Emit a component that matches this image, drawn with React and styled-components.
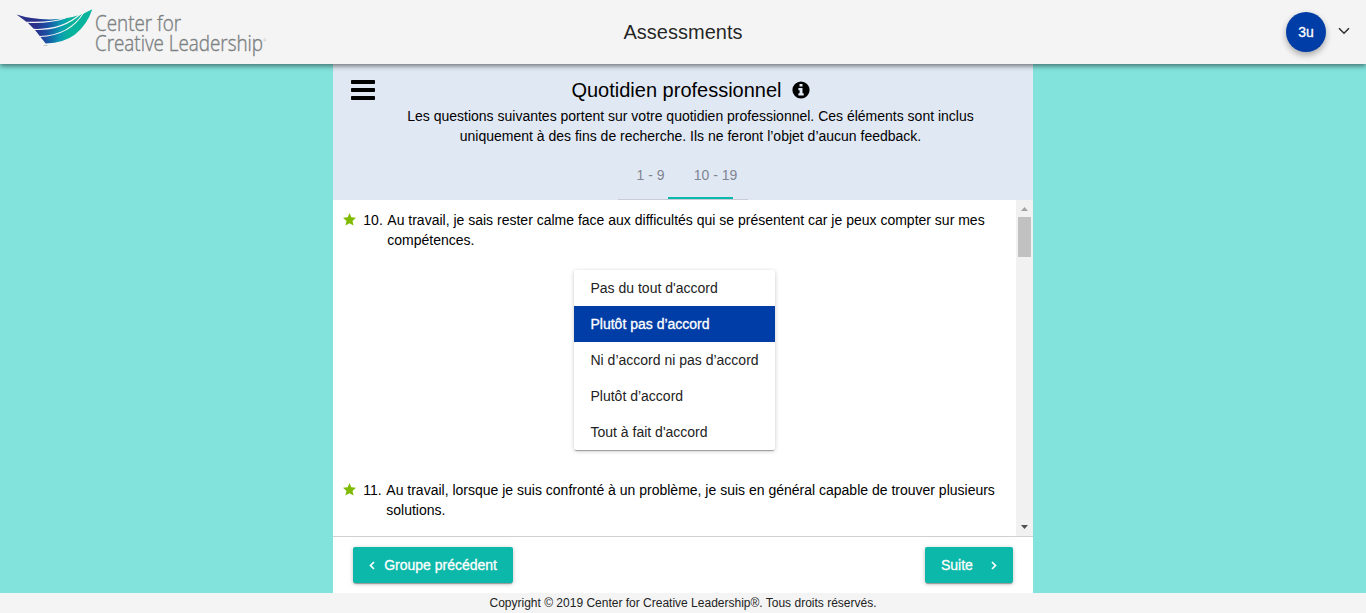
import React from "react";
import styled, { createGlobalStyle } from "styled-components";

const GlobalStyle = createGlobalStyle`
  * { box-sizing: border-box; }
  html, body { margin: 0; padding: 0; }
  body {
    overflow: hidden;
    font-family: "Liberation Sans", Arial, sans-serif;
    font-size: 14px;
    line-height: 20px;
    color: #000;
  }
`;

const Page = styled.div`
  display: flex;
  flex-direction: column;
  height: 613px;
  background: #82e2dc;
`;

const Header = styled.header`
  flex: 0 0 64px;
  z-index: 2;
  display: grid;
  grid-template-columns: 1fr auto 1fr;
  align-items: center;
  padding: 0 16px;
  background: #f4f4f4;
  box-shadow: 0 2px 5px rgba(0, 0, 0, 0.5);
`;

const Logo = styled.svg`
  display: block;
  width: 256px;
  height: 52px;
  overflow: visible;
`;

const AppTitle = styled.h1`
  margin: 0;
  font-size: 20px;
  font-weight: 400;
  color: rgba(0, 0, 0, 0.87);
`;

const Account = styled.div`
  display: flex;
  justify-content: flex-end;
  align-items: center;
  gap: 12px;
`;

const Avatar = styled.div`
  width: 40px;
  height: 40px;
  border-radius: 50%;
  background: #003da6;
  color: #fff;
  font-weight: 400;
  -webkit-text-stroke: 0.3px #fff;
  line-height: 40px;
  text-align: center;
  box-shadow: 0 3px 6px rgba(0, 0, 0, 0.32);
`;

const Chevron = styled.svg`
  display: block;
  width: 12px;
  height: 8px;
  margin-top: -3px;
`;

const Panel = styled.main`
  flex: 1;
  min-height: 0;
  display: flex;
  flex-direction: column;
  width: 700px;
  margin: 0 auto;
  background: #fff;
`;

const SectionHead = styled.section`
  flex: 0 0 136px;
  display: grid;
  grid-template-columns: 60px 595px 45px;
  background: #e0e8f4;
`;

const MenuIcon = styled.svg`
  width: 24px;
  height: 20px;
  margin: 16px 0 0 18px;
`;

const SectionBody = styled.div`
  display: flex;
  flex-direction: column;
  align-items: center;
  height: 136px;
  padding-top: 16px;
`;

const SectionTitle = styled.h2`
  display: flex;
  align-items: center;
  gap: 10px;
  height: 20px;
  margin: 0 0 6px;
  font-size: 20px;
  font-weight: 400;
`;

const Intro = styled.p`
  margin: 0;
  width: 590px;
  text-align: center;
`;

const Tabs = styled.nav`
  display: grid;
  grid-template-columns: 65px 65px;
  width: 130px;
  height: 48px;
  margin: 6px 0 0 -15px;
  position: relative;
  border-bottom: 1px solid #c9ccd6;
`;

const Tab = styled.span`
  line-height: 46px;
  text-align: center;
  color: #7f8591;
`;

const InkBar = styled.div`
  position: absolute;
  left: 50px;
  bottom: 0;
  width: 65px;
  height: 2px;
  background: #0bb8a9;
`;

const Scroller = styled.section`
  flex: 0 0 336px;
  display: grid;
  grid-template-columns: 1fr 17px;
  grid-template-rows: 336px;
  overflow: hidden;
`;

const Questions = styled.div`
  display: flex;
  flex-direction: column;
  overflow: hidden;
  padding: 10px 0 0 10px;
`;

const Question = styled.article`
  flex: 0 0 270px;
`;

const Prompt = styled.div`
  display: grid;
  grid-template-columns: 20.3px ${(p) => p.$number}px 1fr;
`;

const Star = styled.svg`
  width: 13px;
  height: 13px;
  margin-top: 3px;
`;

const PromptText = styled.p`
  margin: 0;
  max-width: 622px;
`;

const Options = styled.ul`
  width: 201px;
  margin: 20px 0 0 231px;
  padding: 0;
  list-style: none;
  border-radius: 2px;
  background: #fff;
  box-shadow: 0 1px 4px rgba(0, 0, 0, 0.22), 0 2px 1px -1px rgba(0, 0, 0, 0.3);
`;

const Option = styled.li`
  height: 36px;
  padding-left: 16.5px;
  line-height: 36px;
  color: ${(p) => (p.$selected ? "#fff" : "#222")};
  background: ${(p) => (p.$selected ? "#003da6" : "transparent")};
  -webkit-text-stroke: ${(p) => (p.$selected ? "0.3px #fff" : "0")};
`;

const ScrollTrack = styled.div`
  display: flex;
  flex-direction: column;
  align-items: center;
  background: #f1f1f1;
`;

const ScrollArrow = styled.svg`
  display: block;
  width: 17px;
  height: 17px;
`;

const ScrollThumb = styled.div`
  width: 13px;
  height: 40px;
  margin-bottom: auto;
  background: #c1c1c1;
`;

const Actions = styled.div`
  flex: 1;
  display: flex;
  justify-content: space-between;
  align-items: flex-start;
  padding: 10px 20px 0;
  border-top: 1px solid #d0d0d0;
`;

const Button = styled.button`
  display: flex;
  justify-content: space-between;
  align-items: center;
  width: ${(p) => p.$width}px;
  height: 36px;
  padding: 0 16px;
  border: 0;
  border-radius: 2px;
  font: 14px "Liberation Sans", Arial, sans-serif;
  color: #fff;
  -webkit-text-stroke: 0.3px #fff;
  background: #0bb8a9;
  box-shadow: 0 1px 4px rgba(0, 0, 0, 0.26), 0 2px 1px -1px rgba(0, 0, 0, 0.3);
`;

const Arrow = styled.svg`
  width: 6px;
  height: 9px;
  margin-top: 1px;
`;

const Footer = styled.footer`
  flex: 0 0 20px;
  background: #f4f4f4;
  font-size: 12px;
  line-height: 20px;
  text-align: center;
  color: #222;
`;

const questions = [
  {
    number: 10,
    gutter: 24,
    text: "Au travail, je sais rester calme face aux difficultés qui se présentent car je peux compter sur mes compétences.",
    options: [
      "Pas du tout d'accord",
      "Plutôt pas d’accord",
      "Ni d’accord ni pas d’accord",
      "Plutôt d’accord",
      "Tout à fait d'accord",
    ],
    selected: 1,
  },
  {
    number: 11,
    gutter: 23,
    text: "Au travail, lorsque je suis confronté à un problème, je suis en général capable de trouver plusieurs solutions.",
  },
];

function BrandLogo() {
  return (
    <Logo viewBox="16 6 256 52">
      <defs>
        <linearGradient id="wing" gradientUnits="userSpaceOnUse" x1="36" y1="25" x2="74" y2="28">
          <stop offset="0" stopColor="#2a2f8a" />
          <stop offset="0.3" stopColor="#1a4fa3" />
          <stop offset="0.65" stopColor="#0a9ab2" />
          <stop offset="0.85" stopColor="#06b09d" />
          <stop offset="1" stopColor="#06b39c" />
        </linearGradient>
      </defs>
      <path d="M16.5 14.6Q30 19.2 50 19.4Q76 19 92.3 9.2Q87 25 75 34.5Q64 43 45.7 43.5L40.5 37L35 30L28 23Z" fill="url(#wing)" />
      <g fill="none" stroke="#f4f4f4" strokeWidth="1.1">
        <path d="M26.5 22.2Q50 23.4 65.5 18" />
        <path d="M33.5 29.4Q62 30.5 80.5 14" />
        <path d="M39.5 36.5Q70 35.5 83.6 12.5" />
      </g>
      <text x="43.8" y="45.7" fontSize="2.5" fill="#777">TM</text>
      <g fill="#7c8182" stroke="#7c8182" strokeWidth="0.4" fontFamily="'Open Sans', sans-serif" fontWeight="300" fontSize="22">
        <text x="95" y="30.8" textLength="86" lengthAdjust="spacingAndGlyphs">Center for</text>
        <text x="95" y="50.8" textLength="168" lengthAdjust="spacingAndGlyphs">Creative Leadership</text>
        <text x="263.2" y="41.8" fontSize="3.6" strokeWidth="0">®</text>
      </g>
    </Logo>
  );
}

export default function App() {
  return (
    <>
      <GlobalStyle />
      <Page>
        <Header>
          <BrandLogo />
          <AppTitle>Assessments</AppTitle>
          <Account>
            <Avatar>3u</Avatar>
            <Chevron viewBox="0 0 12 8">
              <path d="M1 1.2L6 6.2L11 1.2" fill="none" stroke="#333" strokeWidth="1.6" />
            </Chevron>
          </Account>
        </Header>
        <Panel>
          <SectionHead>
            <MenuIcon viewBox="0 0 24 20">
              <rect width="24" height="4" rx="0.8" />
              <rect y="8" width="24" height="4" rx="0.8" />
              <rect y="16" width="24" height="4" rx="0.8" />
            </MenuIcon>
            <SectionBody>
              <SectionTitle>
                Quotidien professionnel
                <svg width="18" height="18" viewBox="0 0 18 18">
                  <circle cx="9" cy="9" r="8.6" />
                  <path d="M7.5 3.1h3v2.5h-3zM6.4 7h4.1v5.2h1.2v2.2H6.4v-2.2h1.2V9.2H6.4z" fill="#e0e8f4" />
                </svg>
              </SectionTitle>
              <Intro>
                Les questions suivantes portent sur votre quotidien professionnel. Ces éléments sont inclus
                uniquement à des fins de recherche. Ils ne feront l’objet d’aucun feedback.
              </Intro>
              <Tabs>
                <Tab>1 - 9</Tab>
                <Tab>10 - 19</Tab>
                <InkBar />
              </Tabs>
            </SectionBody>
          </SectionHead>
          <Scroller>
            <Questions>
              {questions.map((q) => (
                <Question key={q.number}>
                  <Prompt $number={q.gutter}>
                    <Star viewBox="0 0 13 13">
                      <path d="M6.5 0L8.3 4.3L13 4.8L9.5 8L10.6 12.6L6.5 10.2L2.4 12.6L3.5 8L0 4.8L4.7 4.3Z" fill="#7fba00" />
                    </Star>
                    <span>{q.number}.</span>
                    <PromptText>{q.text}</PromptText>
                  </Prompt>
                  {q.options && (
                    <Options>
                      {q.options.map((label, i) => (
                        <Option key={label} $selected={i === q.selected}>{label}</Option>
                      ))}
                    </Options>
                  )}
                </Question>
              ))}
            </Questions>
            <ScrollTrack>
              <ScrollArrow viewBox="0 0 17 17"><path d="M5 11L8.5 7L12 11Z" fill="#a3a3a3" /></ScrollArrow>
              <ScrollThumb />
              <ScrollArrow viewBox="0 0 17 17"><path d="M5 6L8.5 10L12 6Z" fill="#505050" /></ScrollArrow>
            </ScrollTrack>
          </Scroller>
          <Actions>
            <Button $width={160}>
              <Arrow viewBox="0 0 6 9"><path d="M5 1L1.5 4.5L5 8" fill="none" stroke="#fff" strokeWidth="1.7" /></Arrow>
              Groupe précédent
            </Button>
            <Button $width={88}>
              Suite
              <Arrow viewBox="0 0 6 9"><path d="M1 1L4.5 4.5L1 8" fill="none" stroke="#fff" strokeWidth="1.7" /></Arrow>
            </Button>
          </Actions>
        </Panel>
        <Footer>Copyright © 2019 Center for Creative Leadership®. Tous droits réservés.</Footer>
      </Page>
    </>
  );
}
